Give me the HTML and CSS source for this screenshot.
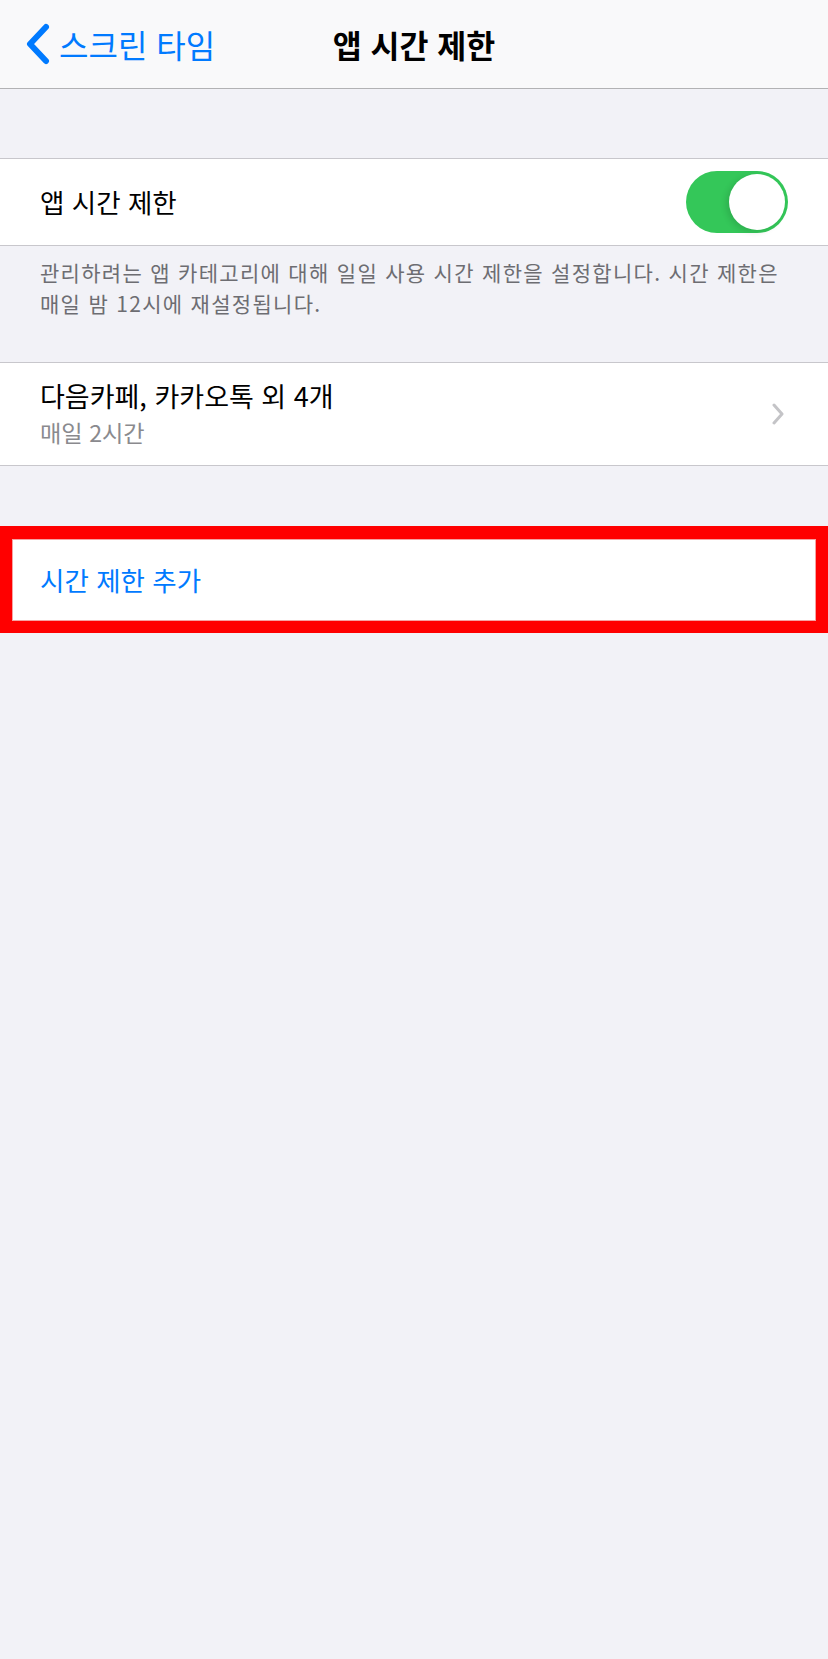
FILE: index.html
```html
<!DOCTYPE html>
<html lang="ko">
<head>
    <meta charset="UTF-8">
    <meta name="viewport" content="width=device-width, initial-scale=1.0">
    <title>앱 시간 제한</title>
    <link rel="stylesheet" href="styles.css">
</head>
<body>
    <div class="screen">
        <header class="nav">
            <a class="back" href="">
                <svg class="back-icon" width="25" height="42" viewBox="0 0 25 42">
                    <path d="M21 4 L5 21 L21 38" fill="none" stroke="#007aff" stroke-width="6" stroke-linecap="round" stroke-linejoin="round"/>
                </svg>
                <span>스크린 타임</span>
            </a>
            <h1 class="title">앱 시간 제한</h1>
            <div></div>
        </header>

        <section class="group group-first">
            <div class="cell">
                <span class="cell-label">앱 시간 제한</span>
                <div class="switch on"><span class="knob"></span></div>
            </div>
        </section>
        <div class="footer">
            <p>관리하려는 앱 카테고리에 대해 일일 사용 시간 제한을 설정합니다. 시간 제한은</p>
            <p>매일 밤 12시에 재설정됩니다.</p>
        </div>

        <section class="group">
            <div class="cell cell-sub">
                <div class="cell-text">
                    <div class="cell-title">다음카페, 카카오톡 외 4개</div>
                    <div class="cell-detail">매일 2시간</div>
                </div>
                <svg class="chevron" width="14" height="22" viewBox="0 0 14 22">
                    <path d="M3 2 L11 11 L3 20" fill="none" stroke="#c4c4c7" stroke-width="3" stroke-linecap="round" stroke-linejoin="round"/>
                </svg>
            </div>
        </section>

        <div class="highlight">
            <div class="cell cell-action">시간 제한 추가</div>
        </div>
    </div>
</body>
</html>
```

FILE: styles.css
```css
body, h1, p {margin: 0; padding: 0;}
body {
    font-family: "Noto Sans CJK KR", "Noto Sans", sans-serif;
    background: #f2f2f7;
    color: #000;
}
.screen {
    width: 828px;
    min-height: 1659px;
    background: #f2f2f7;
}

/* nav bar */
.nav {
    display: grid;
    grid-template-columns: 1fr auto 1fr;
    align-items: center;
    height: 88px;
    background: #f9f9fa;
    border-bottom: 1px solid #b2b2b4;
}
.back {
    display: flex;
    align-items: center;
    gap: 9px;
    padding-left: 25px;
    color: #007aff;
    text-decoration: none;
    font-size: 32px;
    line-height: 40px;
}
.back-icon {display: block;}
.title {
    font-size: 31.5px;
    font-weight: 700;
    line-height: 40px;
}

/* groups */
.group {
    background: #fff;
    border-top: 1px solid #c8c7cc;
    border-bottom: 1px solid #c8c7cc;
}
.group-first {margin-top: 69px;}
.cell {
    display: flex;
    align-items: center;
    justify-content: space-between;
    height: 86px;
    padding: 0 40px;
}
.cell-label {
    font-size: 26.5px;
    line-height: 30px;
}

.switch {
    display: flex;
    justify-content: flex-end;
    align-items: center;
    box-sizing: border-box;
    width: 102px;
    height: 62px;
    padding: 3px;
    border-radius: 31px;
    background: #34c759;
}
.knob {
    width: 56px;
    height: 56px;
    border-radius: 50%;
    background: #fff;
    box-shadow: -3px 2px 6px rgba(0, 0, 0, 0.12);
}

.footer {
    padding: 11px 10px 44px 40px;
    font-size: 21px;
    letter-spacing: 1.3px;
    line-height: 30.5px;
    color: #6d6d72;
    white-space: nowrap;
}

.cell-sub {
    height: auto;
    padding: 18px 43px 19px 40px;
}
.cell-title {
    font-size: 27px;
    line-height: 30px;
}
.cell-detail {
    margin-top: 7px;
    font-size: 23.2px;
    line-height: 28px;
    color: #8a8a8e;
}
.chevron {display: block;}

/* red frame around the add row */
.highlight {
    margin-top: 60px;
    border: 12px solid #ff0000;
    border-top-width: 13px;
}
.cell-action {
    height: 82px;
    padding: 0 28px;
    background: #fff;
    box-shadow: inset 0 0 0 1px #f5a3a3;
    color: #007aff;
    font-size: 26.5px;
    line-height: 30px;
}
```
